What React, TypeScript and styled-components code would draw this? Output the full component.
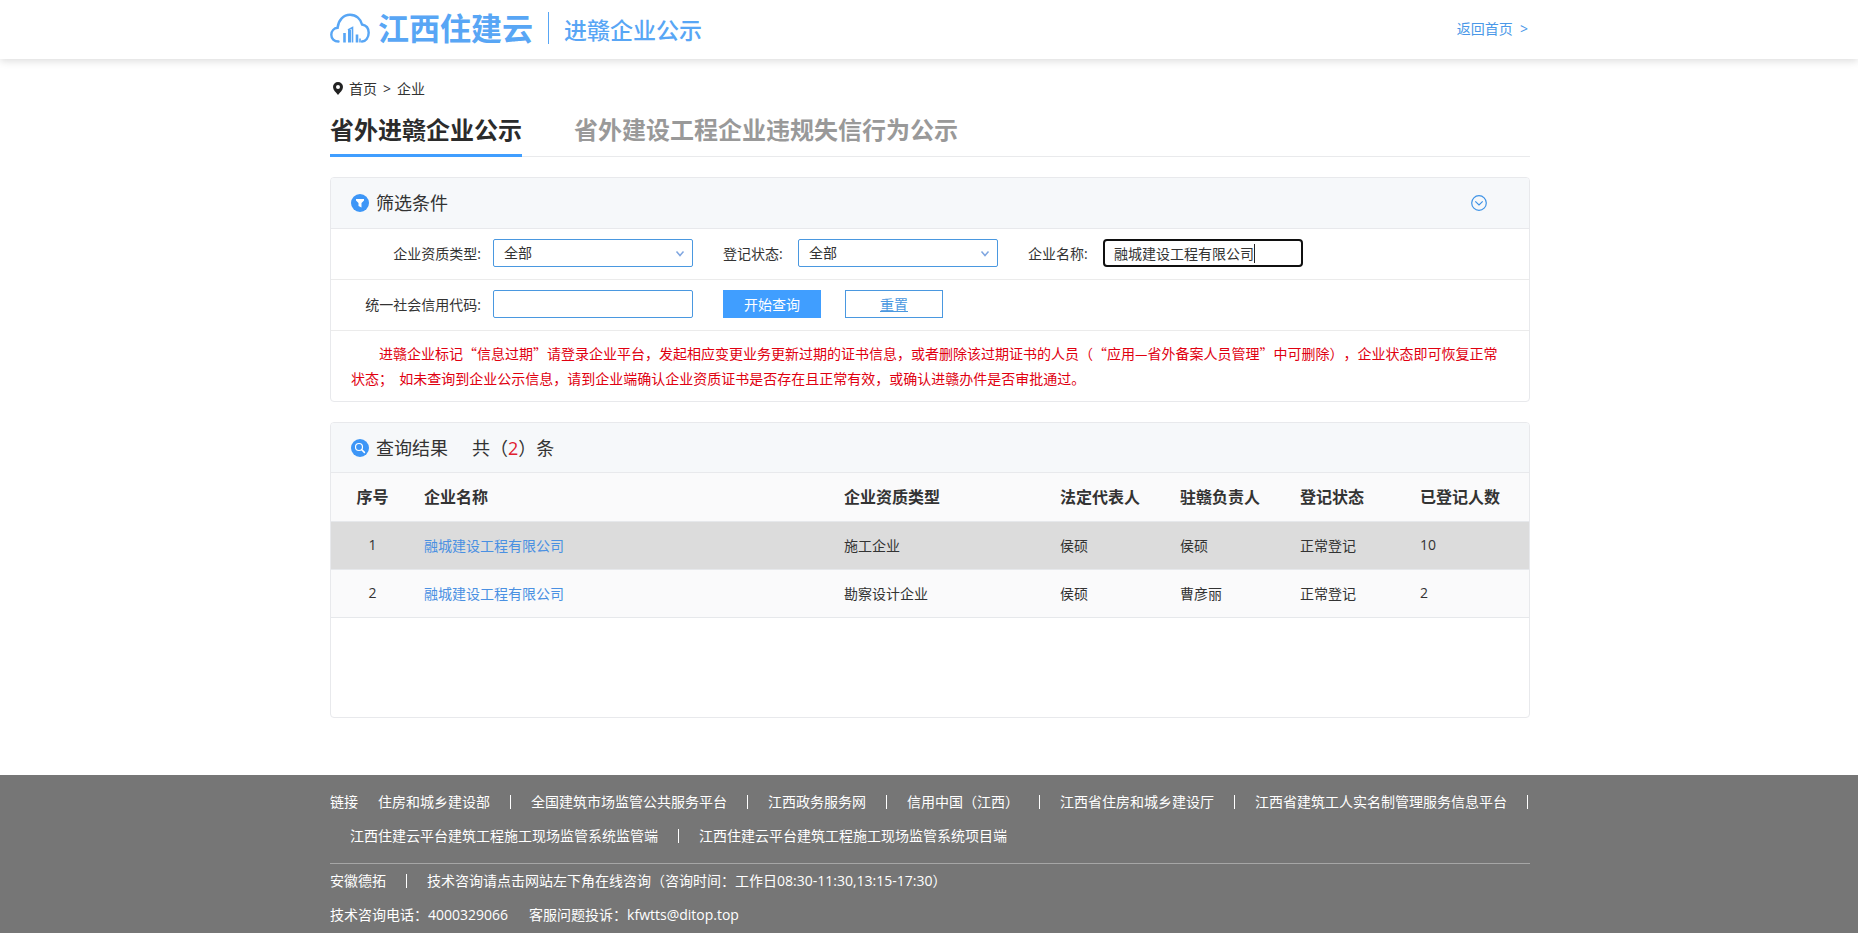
import React, { useState } from "react";
import styled, { createGlobalStyle } from "styled-components";

const GlobalStyle = createGlobalStyle`
  *, *::before, *::after { box-sizing: border-box; }
  body {
    margin: 0;
    background: #fff;
    color: #333;
    font-family: "Open Sans", "Noto Sans CJK SC", sans-serif;
    font-size: 14px;
    text-spacing-trim: space-all;
  }
  a { color: inherit; text-decoration: none; }
  button, input, select { font: inherit; color: inherit; }
`;

const Page = styled.div`
  min-height: 100vh;
  display: flex;
  flex-direction: column;
`;

const Shell = styled.div`
  width: 100%;
  max-width: 1202px;
  margin: 0 auto;
  padding-left: 2px;
`;

const TopBar = styled.header`
  background: #fff;
  box-shadow: 0 2px 8px rgba(0, 0, 0, 0.14);
`;

const TopBarInner = styled(Shell)`
  height: 59px;
  padding-bottom: 4px;
  display: flex;
  align-items: center;
  justify-content: space-between;
`;

const Brand = styled.div`
  display: flex;
  align-items: center;
  color: #58a6f5;
`;

const BrandName = styled.span`
  margin-left: 8px;
  font-size: 31px;
  line-height: 40px;
  font-weight: 700;
`;

const BrandSection = styled.span`
  margin-left: 15px;
  padding: 4px 0 0 15px;
  border-left: 1px solid #58a6f5;
  font-size: 23px;
  line-height: 28px;
  font-weight: 500;
`;

const BackLink = styled.a`
  padding-right: 2px;
  color: #4a98e8;
`;

const Main = styled(Shell).attrs({ as: "main" })`
  flex: 1;
  padding-top: 14px;
`;

const Breadcrumb = styled.nav`
  height: 32px;
  padding: 0 0 2px 3px;
  display: flex;
  align-items: center;
  gap: 6px;
`;

const Tabs = styled.div`
  display: flex;
  gap: 52px;
  height: 52px;
  margin-bottom: 20px;
  border-bottom: 1px solid #e9eaec;
`;

const Tab = styled.button<{ $active?: boolean }>`
  height: 52px;
  padding: 0;
  border: 0;
  border-bottom: 3px solid ${(p) => (p.$active ? "#409eff" : "transparent")};
  background: none;
  color: ${(p) => (p.$active ? "#2b2b2b" : "#999")};
  font-size: 24px;
  line-height: 48px;
  font-weight: 700;
  cursor: pointer;
`;

const Panel = styled.section<{ $minHeight?: number }>`
  margin-bottom: 20px;
  min-height: ${(p) => (p.$minHeight ? `${p.$minHeight}px` : "0")};
  border: 1px solid #e8e9ec;
  border-radius: 4px;
  overflow: hidden;
`;

const PanelHead = styled.div<{ $compact?: boolean }>`
  height: ${(p) => (p.$compact ? "50px" : "51px")};
  padding: 0 42px 0 20px;
  display: flex;
  align-items: center;
  gap: 7px;
  border-bottom: 1px solid #e8e9ec;
  background: #f6f8fa;
`;

const PanelTitle = styled.h2`
  margin: 0;
  font-size: 18px;
  line-height: 24px;
  font-weight: 400;
`;

const ResultCount = styled.span`
  margin-left: 17px;
  font-size: 18px;
  line-height: 24px;
  b { color: #e0202f; font-weight: 400; }
`;

const ToggleButton = styled.button`
  margin-left: auto;
  padding: 0;
  border: 0;
  display: flex;
  background: none;
  cursor: pointer;
`;

const FilterRow = styled.div`
  padding: 10px 0;
  display: flex;
  border-bottom: 1px solid #ebebeb;
`;

const Field = styled.div`
  display: flex;
  margin-right: 30px;
`;

const FieldLabel = styled.label<{ $lead?: boolean }>`
  width: ${(p) => (p.$lead ? "162px" : "75px")};
  padding-right: ${(p) => (p.$lead ? "12px" : "0")};
  text-align: ${(p) => (p.$lead ? "right" : "left")};
  line-height: 30px;
`;

const Control = styled.div`
  position: relative;
  width: 200px;
  height: 28px;
`;

const Select = styled.select`
  width: 100%;
  height: 28px;
  padding: 0 30px 2px 10px;
  appearance: none;
  border: 1px solid #4a98e0;
  border-radius: 2px;
  background: #fff;
`;

const Chevron = styled.svg`
  position: absolute;
  right: 8px;
  top: 11px;
  pointer-events: none;
`;

const TextInput = styled.input<{ $focused?: boolean }>`
  width: 100%;
  height: 28px;
  padding: 0 ${(p) => (p.$focused ? "9px" : "10px")};
  border: ${(p) => (p.$focused ? "2px solid #101010" : "1px solid #4a98e0")};
  border-radius: ${(p) => (p.$focused ? "4px" : "2px")};
  outline: 0;
  background: #fff;
`;

const Caret = styled.span`
  position: absolute;
  left: 151px;
  top: 5px;
  width: 1px;
  height: 19px;
  background: #222;
`;

const Button = styled.button<{ $primary?: boolean }>`
  width: 98px;
  height: 28px;
  margin-right: 24px;
  padding: 0;
  border: 1px solid ${(p) => (p.$primary ? "#409eff" : "#4a98e0")};
  background: ${(p) => (p.$primary ? "#409eff" : "#fff")};
  color: ${(p) => (p.$primary ? "#fff" : "#4a98e0")};
  text-decoration: ${(p) => (p.$primary ? "none" : "underline")};
  cursor: pointer;
`;

const Notice = styled.p`
  margin: 0;
  padding: 10px 20px;
  color: #e00010;
  font-family: "Noto Sans CJK SC", sans-serif;
  line-height: 25px;
  text-indent: 28px;
`;

const ResultTable = styled.table`
  width: 100%;
  table-layout: fixed;
  border-collapse: separate;
  border-spacing: 0;
`;

const Cell = styled.td<{ $center?: boolean }>`
  height: 48px;
  padding: 0 10px 2px;
  border-bottom: 1px solid #e6e8eb;
  text-align: ${(p) => (p.$center ? "center" : "left")};
  a { color: #4a90e2; }
`;

const HeadCell = styled(Cell).attrs({ as: "th", scope: "col" })`
  height: 49px;
  background: #fafafb;
  font-size: 16px;
  font-weight: 700;
  white-space: nowrap;
`;

const Row = styled.tr<{ $hovered?: boolean }>`
  background: ${(p) => (p.$hovered ? "#dcdcdc" : "#fafafb")};
`;

const Footer = styled.footer`
  margin-top: 37px;
  padding: 10px 0 1px;
  background: #767676;
  color: #fff;
`;

const FooterLinks = styled.div`
  padding-bottom: 10px;
  display: flex;
  flex-wrap: wrap;
  border-bottom: 1px solid #a6a6a6;
  line-height: 34px;
`;

const FooterItem = styled.span<{ $pad?: boolean; $last?: boolean }>`
  padding: 0 20px 0 ${(p) => (p.$pad ? "20px" : "0")};
  position: relative;
  border-right: 1px solid transparent;
  &::after {
    content: "";
    display: ${(p) => (p.$last ? "none" : "block")};
    position: absolute;
    right: -1px;
    top: 10px;
    width: 1px;
    height: 14px;
    background: #fff;
  }
`;

const FooterLine = styled.div`
  display: flex;
  line-height: 34px;
`;

const CloudLogo = () => (
  <svg width="40" height="30" viewBox="0 0 40 30" fill="none" stroke="#58a6f5" strokeLinecap="round">
    <path
      strokeWidth="2.400"
      d="M8.500 28.500C4 28.500 1.300 25.500 1.300 21.800c0-3.800 2.700-6.600 6.300-7C8.400 7.200 13.500 1.800 20 1.800c6.300 0 10.800 4.200 12 9.700 4.200.8 6.700 4.200 6.700 8.300 0 4.800-3 8.700-6.700 8.700"
    />
    <path strokeWidth="2.600" strokeLinecap="butt" d="M14.500 29.500v-9.500M27 29.500v-8" />
    <path strokeWidth="3" strokeLinecap="butt" d="M19.500 29.500V17" />
    <path strokeWidth="1.600" strokeLinecap="butt" d="M18 17l4.500-2.500v15M30 29.500v-4" />
  </svg>
);

const PinIcon = () => (
  <svg width="10" height="13" viewBox="0 0 10 13">
    <path fillRule="evenodd" fill="#222" d="M5 0a5 5 0 0 1 5 5c0 3-3 5.500-5 8C3 10.500 0 8 0 5a5 5 0 0 1 5-5zm0 3a2 2 0 1 0 0 4 2 2 0 0 0 0-4z" />
  </svg>
);

const FilterIcon = () => (
  <svg width="18" height="18" viewBox="0 0 18 18">
    <circle cx="9" cy="9" r="9" fill="#3d96f7" />
    <path d="M5 5h8v1.500L10.500 9v4.500L7.500 12V9L5 6.500z" fill="#fff" />
  </svg>
);

const SearchIcon = () => (
  <svg width="18" height="18" viewBox="0 0 18 18" fill="none" stroke="#fff" strokeLinecap="round">
    <circle cx="9" cy="9" r="9" fill="#3d96f7" stroke="none" />
    <circle cx="8" cy="8" r="3.500" strokeWidth="1.200" />
    <path d="M10.800 10.800l2.600 2.600" strokeWidth="1.600" />
  </svg>
);

const ExpandIcon = () => (
  <svg width="16" height="16" viewBox="0 0 16 16" fill="none" stroke="#3f93e6" strokeWidth="1.200">
    <circle cx="8" cy="8" r="7.300" />
    <path d="M4.300 6.300L8 10l3.700-3.700" />
  </svg>
);

const SelectChevron = () => (
  <Chevron width="10" height="8" viewBox="0 0 10 8" fill="none" stroke="#7fa6e0" strokeWidth="1.500">
    <path d="M1.500 1.500L5 5.500l3.500-4" />
  </Chevron>
);

const links = [
  "住房和城乡建设部",
  "全国建筑市场监管公共服务平台",
  "江西政务服务网",
  "信用中国（江西）",
  "江西省住房和城乡建设厅",
  "江西省建筑工人实名制管理服务信息平台",
  "江西住建云平台建筑工程施工现场监管系统监管端",
  "江西住建云平台建筑工程施工现场监管系统项目端",
];

const headings = ["序号", "企业名称", "企业资质类型", "法定代表人", "驻赣负责人", "登记状态", "已登记人数"];

const rows = [
  { name: "融城建设工程有限公司", type: "施工企业", legal: "侯硕", local: "侯硕", status: "正常登记", people: 10 },
  { name: "融城建设工程有限公司", type: "勘察设计企业", legal: "侯硕", local: "曹彦丽", status: "正常登记", people: 2 },
];

export default function App() {
  const [company, setCompany] = useState("融城建设工程有限公司");
  const [code, setCode] = useState("");

  return (
    <Page>
      <GlobalStyle />
      <TopBar>
        <TopBarInner>
          <Brand>
            <CloudLogo />
            <BrandName>江西住建云</BrandName>
            <BrandSection>进赣企业公示</BrandSection>
          </Brand>
          <BackLink href="#">返回首页 &nbsp;&gt;</BackLink>
        </TopBarInner>
      </TopBar>

      <Main>
        <Breadcrumb>
          <PinIcon />
          <a href="#">首页</a>
          <span>&gt;</span>
          <span>企业</span>
        </Breadcrumb>

        <Tabs>
          <Tab $active>省外进赣企业公示</Tab>
          <Tab>省外建设工程企业违规失信行为公示</Tab>
        </Tabs>

        <Panel>
          <PanelHead>
            <FilterIcon />
            <PanelTitle>筛选条件</PanelTitle>
            <ToggleButton aria-label="展开">
              <ExpandIcon />
            </ToggleButton>
          </PanelHead>
          <FilterRow>
            <Field>
              <FieldLabel $lead htmlFor="type">企业资质类型:</FieldLabel>
              <Control>
                <Select id="type"><option>全部</option></Select>
                <SelectChevron />
              </Control>
            </Field>
            <Field>
              <FieldLabel htmlFor="status">登记状态:</FieldLabel>
              <Control>
                <Select id="status"><option>全部</option></Select>
                <SelectChevron />
              </Control>
            </Field>
            <Field>
              <FieldLabel htmlFor="company">企业名称:</FieldLabel>
              <Control>
                <TextInput id="company" $focused value={company} onChange={(e) => setCompany(e.target.value)} />
                <Caret />
              </Control>
            </Field>
          </FilterRow>
          <FilterRow>
            <Field>
              <FieldLabel $lead htmlFor="code">统一社会信用代码:</FieldLabel>
              <Control>
                <TextInput id="code" value={code} onChange={(e) => setCode(e.target.value)} />
              </Control>
            </Field>
            <Button $primary>开始查询</Button>
            <Button onClick={() => { setCompany(""); setCode(""); }}>重置</Button>
          </FilterRow>
          <Notice>
            进赣企业标记“信息过期”请登录企业平台，发起相应变更业务更新过期的证书信息，或者删除该过期证书的人员（“应用—省外备案人员管理”中可删除），企业状态即可恢复正常状态；&nbsp; 如未查询到企业公示信息，请到企业端确认企业资质证书是否存在且正常有效，或确认进赣办件是否审批通过。
          </Notice>
        </Panel>

        <Panel $minHeight={296}>
          <PanelHead $compact>
            <SearchIcon />
            <PanelTitle>查询结果</PanelTitle>
            <ResultCount>共（<b>2</b>）条</ResultCount>
          </PanelHead>
          <ResultTable>
            <colgroup>
              <col width="83" />
              <col />
              <col width="216" />
              <col width="120" />
              <col width="120" />
              <col width="120" />
              <col width="119" />
            </colgroup>
            <thead>
              <tr>
                {headings.map((h, i) => (
                  <HeadCell key={h} $center={i === 0}>{h}</HeadCell>
                ))}
              </tr>
            </thead>
            <tbody>
              {rows.map((r, i) => (
                <Row key={r.type} $hovered={i === 0}>
                  <Cell $center>{i + 1}</Cell>
                  <Cell><a href="#">{r.name}</a></Cell>
                  <Cell>{r.type}</Cell>
                  <Cell>{r.legal}</Cell>
                  <Cell>{r.local}</Cell>
                  <Cell>{r.status}</Cell>
                  <Cell>{r.people}</Cell>
                </Row>
              ))}
            </tbody>
          </ResultTable>
        </Panel>
      </Main>

      <Footer>
        <Shell>
          <FooterLinks>
            <span>链接</span>
            {links.map((l, i) => (
              <FooterItem key={l} $pad $last={i === links.length - 1}>
                <a href="#">{l}</a>
              </FooterItem>
            ))}
          </FooterLinks>
          <FooterLine>
            <FooterItem>安徽德拓</FooterItem>
            <FooterItem $pad $last>技术咨询请点击网站左下角在线咨询（咨询时间：工作日08:30-11:30,13:15-17:30）</FooterItem>
          </FooterLine>
          <FooterLine>
            <FooterItem $last>技术咨询电话：4000329066</FooterItem>
            <FooterItem $last>客服问题投诉：kfwtts@ditop.top</FooterItem>
          </FooterLine>
        </Shell>
      </Footer>
    </Page>
  );
}
